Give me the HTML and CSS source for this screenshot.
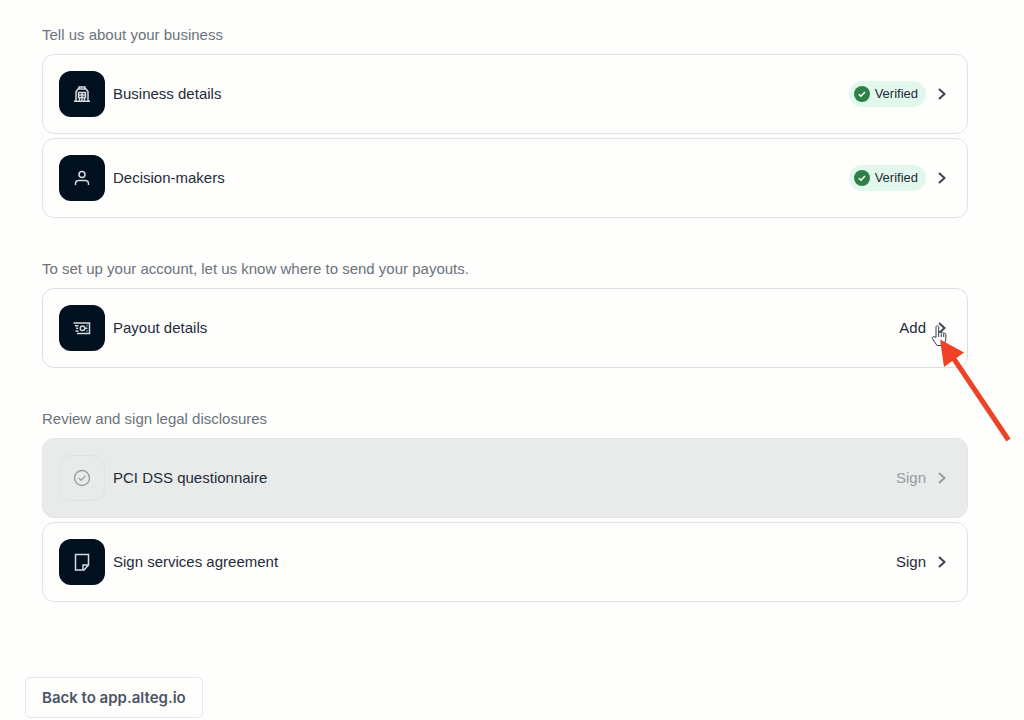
FILE: index.html
```html
<!DOCTYPE html>
<html lang="en">
<head>
    <meta charset="UTF-8">
    <meta name="viewport" content="width=device-width, initial-scale=1.0">
    <title>Account setup</title>
    <link rel="stylesheet" href="styles.css">
</head>
<body>
    <main>
        <section>
            <h2>Tell us about your business</h2>
            <div class="cards">
                <button type="button" class="card">
                    <span class="icon">
                        <svg width="18" height="18" viewBox="0 0 18 18">
                            <path d="M6 4V2h6v2M3 16V6.500L5 4h8l2 2.500V16M1 16.200h16M5.500 7.500h7v5h-7zM5.500 10h7M9 7.500V16M6.500 13v3M11.500 13v3"/>
                        </svg>
                    </span>
                    <span class="title">Business details</span>
                    <span class="badge">
                        <svg width="16" height="16" viewBox="0 0 16 16">
                            <circle cx="8" cy="8" r="8"/>
                            <path d="M4.8 8.2l2.2 2.1 4-4.2"/>
                        </svg>
                        Verified
                    </span>
                    <svg class="chevron" width="10" height="14" viewBox="0 0 10 14"><path d="M2 2l5.5 5L2 12"/></svg>
                </button>
                <button type="button" class="card">
                    <span class="icon">
                        <svg width="18" height="18" viewBox="0 0 18 18">
                            <circle cx="9" cy="5.5" r="3"/>
                            <path d="M2.500 16v-1.500a3 3 0 0 1 3-3h7a3 3 0 0 1 3 3V16"/>
                        </svg>
                    </span>
                    <span class="title">Decision-makers</span>
                    <span class="badge">
                        <svg width="16" height="16" viewBox="0 0 16 16">
                            <circle cx="8" cy="8" r="8"/>
                            <path d="M4.8 8.2l2.2 2.1 4-4.2"/>
                        </svg>
                        Verified
                    </span>
                    <svg class="chevron" width="10" height="14" viewBox="0 0 10 14"><path d="M2 2l5.5 5L2 12"/></svg>
                </button>
            </div>
        </section>

        <section>
            <h2>To set up your account, let us know where to send your payouts.</h2>
            <div class="cards">
                <button type="button" class="card active">
                    <span class="icon">
                        <svg width="18" height="18" viewBox="0 0 18 18">
                            <path d="M.5 4h16v10.500H4M2 6.700h3.500M3 9.200h2M2.500 11.900h3M12 9.200h2.500M13.500 6.500h1M13.500 12h1"/>
                            <circle cx="9.5" cy="9.200" r="2.3"/>
                        </svg>
                    </span>
                    <span class="title">Payout details</span>
                    <span class="action">Add</span>
                    <svg class="chevron" width="10" height="14" viewBox="0 0 10 14"><path d="M2 2l5.5 5L2 12"/></svg>
                    <svg class="pointer" width="84" height="124" viewBox="0 0 84 124">
                        <path class="hand" d="M6 17.500V7.200c0-2 2.700-2 2.700 0V13c.2-1.500 2.500-1.300 2.600.2.300-1.200 2.200-1 2.400.5.400-1.100 2.100-.7 2.100.8v5.200l-2 5.800H7c-1.500-2.500-3.200-4.300-4.600-7-.7-1.700 1.300-2.600 3.600-1zM8.700 13v4M11.300 13.500V17M13.700 14v3"/>
                        <path class="shaft" d="M22 36l56.500 84"/>
                        <path class="head" d="M10 19.500l4 27.500 20-14.500z"/>
                    </svg>
                </button>
            </div>
        </section>

        <section>
            <h2>Review and sign legal disclosures</h2>
            <div class="cards">
                <button type="button" class="card" disabled>
                    <span class="icon">
                        <svg width="18" height="18" viewBox="0 0 18 18">
                            <circle cx="9" cy="9" r="7.500"/>
                            <path d="M5.700 9l2.500 2.300 4.200-4.300"/>
                        </svg>
                    </span>
                    <span class="title">PCI DSS questionnaire</span>
                    <span class="action">Sign</span>
                    <svg class="chevron" width="10" height="14" viewBox="0 0 10 14"><path d="M2 2l5.5 5L2 12"/></svg>
                </button>
                <button type="button" class="card">
                    <span class="icon">
                        <svg width="18" height="18" viewBox="0 0 18 18">
                            <path d="M2.500 1.500h13v10.500l-4.500 5h-8.500zM15.500 12H10v5"/>
                        </svg>
                    </span>
                    <span class="title">Sign services agreement</span>
                    <span class="action">Sign</span>
                    <svg class="chevron" width="10" height="14" viewBox="0 0 10 14"><path d="M2 2l5.5 5L2 12"/></svg>
                </button>
            </div>
        </section>
    </main>

    <footer>
        <button type="button" class="back">Back to app.alteg.io</button>
    </footer>
</body>
</html>
```
FILE: styles.css
```css
* {
    box-sizing: border-box;
}

body {
    margin: 0;
    font-family: "Liberation Sans", Arial, sans-serif;
    font-size: 15px;
    line-height: 20px;
    color: #1f2b38;
    background-color: #fefefd;
    overflow-x: hidden;
}

main {
    display: flex;
    flex-direction: column;
    gap: 41px;
    padding: 25px 56px 0 42px;
}

h2 {
    margin: 0 0 9px;
    font-size: 15px;
    font-weight: normal;
    color: #6b737b;
}

.cards {
    display: flex;
    flex-direction: column;
    gap: 4px;
}

.card {
    display: flex;
    align-items: center;
    width: 100%;
    padding: 16px;
    font: inherit;
    color: inherit;
    text-align: left;
    background-color: transparent;
    border: 1px solid #e2e4e7;
    border-radius: 12px;
    cursor: pointer;
}

.card svg {
    fill: none;
    stroke: currentColor;
}

.icon {
    display: flex;
    align-items: center;
    justify-content: center;
    width: 46px;
    height: 46px;
    margin-right: 8px;
    color: #d5dade;
    background-color: #00101e;
    border-radius: 12px;
}

.icon svg {
    stroke-width: 1.5;
}

.title {
    flex: 1;
}

.badge {
    display: flex;
    align-items: center;
    gap: 5px;
    height: 26px;
    padding: 0 8px 0 5px;
    margin-right: 11px;
    font-size: 13px;
    background-color: #e3f8ec;
    border-radius: 13px;
}

.badge circle {
    fill: #2f8048;
    stroke: none;
}

.badge path {
    stroke: #fff;
    stroke-width: 1.5;
}

.action {
    margin-right: 11px;
}

.card .chevron {
    margin-right: 4px;
    color: #3d4751;
    stroke-width: 2;
}

.card:disabled {
    background-color: #e9ebeb;
    cursor: default;
}

.card:disabled .icon {
    color: #9da3a8;
    background-color: transparent;
    border: 1px solid #dfe2e3;
}

.card:disabled .action,
.card:disabled .chevron {
    color: #949ba2;
}

.active {
    position: relative;
    z-index: 1;
    border-color: #dcdfe4;
}

/* hand cursor and red arrow over the payout row */
.pointer {
    position: absolute;
    top: 31px;
    right: -47px;
    pointer-events: none;
}

.pointer .hand {
    fill: #fff;
    stroke: #343b47;
}

.pointer .shaft {
    stroke: #ef4125;
    stroke-width: 5;
}

.pointer .head {
    fill: #ef4125;
    stroke: none;
}

footer {
    padding: 75px 25px 0;
}

.back {
    height: 41px;
    padding: 0 16px;
    font-family: Inter, sans-serif;
    font-size: 15px;
    font-weight: 600;
    color: #4b5566;
    background-color: transparent;
    border: 1px solid #e3e6eb;
    border-radius: 5px;
    cursor: pointer;
}
```
